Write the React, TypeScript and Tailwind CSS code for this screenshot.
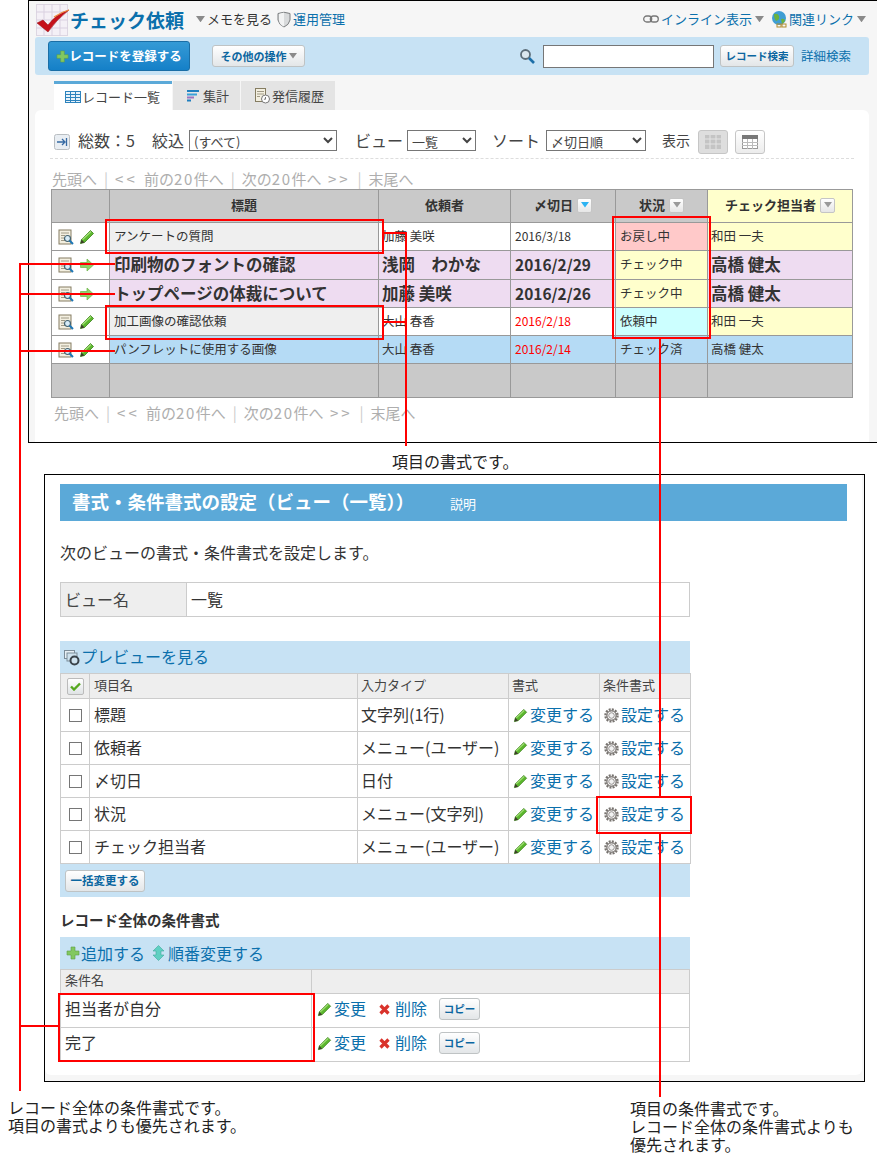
import React from "react";

const Pencil = ({ s = 16 }: { s?: number }) => (
  <svg width={s} height={s} viewBox="0 0 16 16" className="shrink-0">
    <path d="M1.5 14.5 L2.5 10.5 L11.5 1.5 L14.5 4.5 L5.5 13.5 Z" fill="#5cb82e" stroke="#3a7f1a" strokeWidth="0.8" />
    <path d="M3.5 10.5 L12 2.5" stroke="#a6e07a" strokeWidth="1.2" />
    <path d="M1.5 14.5 L2.5 10.5 L5.5 13.5 Z" fill="#3d3d2a" />
  </svg>
);
const Detail = () => (
  <svg width="16" height="16" viewBox="0 0 16 16" className="shrink-0">
    <rect x="1" y="1" width="12" height="14" fill="#f3efe0" stroke="#857d62" />
    <path d="M3 4h8M3 6.5h4M3 9h3M3 11.5h4" stroke="#a09a86" />
    <circle cx="9.5" cy="9.5" r="3" fill="#d7ecf8" stroke="#44626f" strokeWidth="1.2" />
    <path d="M11.5 11.5 L15 15" stroke="#1d76b5" strokeWidth="2" />
  </svg>
);
const Arrow = () => (
  <svg width="16" height="16" viewBox="0 0 16 16" className="shrink-0">
    <path d="M1.5 5.5H8V2l6.5 6L8 14v-3.5H1.5z" fill="#8fd36a" stroke="#6cb548" strokeWidth="0.7" />
  </svg>
);
const Gear = () => (
  <svg width="15" height="15" viewBox="0 0 16 16" className="shrink-0 mt-[3px]">
    <circle cx="8" cy="8" r="6.2" fill="none" stroke="#77736f" strokeWidth="3" strokeDasharray="2 1.2" />
    <circle cx="8" cy="8" r="5" fill="none" stroke="#8d8986" strokeWidth="1.6" />
    <circle cx="8" cy="8" r="3" fill="#f2f2f2" stroke="#8d8986" />
  </svg>
);
const Plus = ({ s = 14 }: { s?: number }) => (
  <svg width={s} height={s} viewBox="0 0 14 14" className="shrink-0">
    <path d="M5 1h4v4h4v4H9v4H5V9H1V5h4z" fill="#82c860" stroke="#5f9f45" strokeWidth="0.6" />
  </svg>
);
const Cross = () => (
  <svg width="13" height="13" viewBox="0 0 13 13" className="shrink-0">
    <path d="M2.5 2.5 L10.5 10.5 M10.5 2.5 L2.5 10.5" stroke="#d9332b" strokeWidth="3.2" />
  </svg>
);
const Tri = ({ c = "#8a8a8a", s = 9 }: { c?: string; s?: number }) => (
  <svg width={s} height={s * 0.7} viewBox="0 0 10 7" className="shrink-0">
    <path d="M0 0h10L5 7z" fill={c} />
  </svg>
);
const SortBtn = ({ blue }: { blue?: boolean }) => (
  <span className="inline-flex items-center justify-center w-[15px] h-[15px] ml-[4px] bg-gradient-to-b from-white to-[#e6e6e6] border border-[#c5c5c5] rounded-[2px]">
    <Tri c={blue ? "#2cb3f2" : "#9a9a9a"} s={8} />
  </span>
);

const Link = ({ children, className = "" }: { children: React.ReactNode; className?: string }) => (
  <span className={"text-[#0b70ac] " + className}>{children}</span>
);
const GrayBtn = ({ children, className = "" }: { children: React.ReactNode; className?: string }) => (
  <span className={"inline-flex items-center justify-center bg-gradient-to-b from-white to-[#e3e6e8] border border-[#bfc3c4] rounded-[3px] text-[#0b66a0] font-bold whitespace-nowrap " + className}>
    {children}
  </span>
);

const Pager = () => (
  <div className="flex text-[15px] leading-[20px] text-[#aeaeae] whitespace-pre">
    先頭へ
    <span className="mx-[7px] text-[#ccc]">|</span>
    <span className="tracking-[3px]">{"<< "}</span>前の<span className="tracking-[1.5px]">20</span>件へ
    <span className="mx-[7px] text-[#ccc]">|</span>
    次の<span className="tracking-[1.5px]">20</span>件へ<span className="tracking-[3px]">{" >>"}</span>
    <span className="mx-[7px] text-[#ccc]">|</span>
    末尾へ
  </div>
);

type Row = { bold?: boolean; edit: boolean; t: string; n: string; d: string; red?: boolean; s: string; p: string; h: string; tb: string; nb: string; sb: string; pb: string };
const rows: Row[] = [
  { edit: true, t: "アンケートの質問", n: "加藤 美咲", d: "2016/3/18", s: "お戻し中", p: "和田 一夫", h: "h-[28px]", tb: "bg-[#efefef]", nb: "bg-white", sb: "bg-[#ffc9c9]", pb: "bg-[#ffffcc]" },
  { bold: true, edit: false, t: "印刷物のフォントの確認", n: "浅岡　わかな", d: "2016/2/29", s: "チェック中", p: "高橋 健太", h: "h-[29px]", tb: "bg-[#eedcf1]", nb: "bg-[#eedcf1]", sb: "bg-[#ffffcc]", pb: "bg-[#eedcf1]" },
  { bold: true, edit: false, t: "トップページの体裁について", n: "加藤 美咲", d: "2016/2/26", s: "チェック中", p: "高橋 健太", h: "h-[28px]", tb: "bg-[#eedcf1]", nb: "bg-[#eedcf1]", sb: "bg-[#ffffcc]", pb: "bg-[#eedcf1]" },
  { edit: true, t: "加工画像の確認依頼", n: "大山 春香", d: "2016/2/18", red: true, s: "依頼中", p: "和田 一夫", h: "h-[28px]", tb: "bg-[#efefef]", nb: "bg-white", sb: "bg-[#ccffff]", pb: "bg-[#ffffcc]" },
  { edit: true, t: "パンフレットに使用する画像", n: "大山 春香", d: "2016/2/14", red: true, s: "チェック済", p: "高橋 健太", h: "h-[28px]", tb: "bg-[#b5dbf5]", nb: "bg-[#b5dbf5]", sb: "bg-[#b5dbf5]", pb: "bg-[#b5dbf5]" },
];

const th1 = "border border-[#999] font-bold text-[13px] text-[#333] text-center p-0 pb-[2px]";
const td1 = "border border-[#999] pl-[3px] pr-0 pt-0 pb-[2px] text-[#333] whitespace-nowrap overflow-hidden";

const RecordTable = () => (
  <table className="ml-[16px] w-[801px] table-fixed border-collapse">
    <colgroup>
      <col className="w-[58px]" />
      <col className="w-[269px]" />
      <col className="w-[132px]" />
      <col className="w-[105px]" />
      <col className="w-[92px]" />
      <col className="w-[145px]" />
    </colgroup>
    <tbody>
      <tr className="h-[33px] bg-[#c9c9c9]">
        <th className={th1}></th>
        <th className={th1}>標題</th>
        <th className={th1}>依頼者</th>
        <th className={th1}><span className="inline-flex items-center justify-center">〆切日<SortBtn blue /></span></th>
        <th className={th1}><span className="inline-flex items-center justify-center">状況<SortBtn /></span></th>
        <th className={th1 + " bg-[#ffffcc]"}><span className="inline-flex items-center justify-center">チェック担当者<SortBtn /></span></th>
      </tr>
      {rows.map((r, i) => {
        const f = r.bold ? "text-[16.5px] font-bold leading-[20px]" : "text-[12.5px] leading-[18px]";
        return (
          <tr key={i} className={r.h}>
            <td className="border border-[#999] p-0 bg-white">
              <div className="flex items-center pl-[6px] gap-[5px]">
                <Detail />
                {r.edit ? <Pencil /> : <Arrow />}
              </div>
            </td>
            <td className={td1 + " pl-[4px] " + f + " " + r.tb}>{r.t}</td>
            <td className={td1 + " " + f + " " + r.nb}>{r.n}</td>
            <td className={td1 + " pl-[4px] " + (r.bold ? "text-[15.5px] font-bold leading-[20px]" : "text-[12px] leading-[18px]") + " " + r.nb + (r.red ? " !text-[#ff0000]" : "")}>{r.d}</td>
            <td className={td1 + " pl-[4px] text-[12.5px] leading-[18px] " + r.sb}>{r.s}</td>
            <td className={td1 + " " + f + " " + r.pb}>{r.p}</td>
          </tr>
        );
      })}
      <tr className="h-[34px] bg-[#c9c9c9]">
        {[0, 1, 2, 3, 4, 5].map((k) => (
          <td key={k} className="border border-[#999] p-0"></td>
        ))}
      </tr>
    </tbody>
  </table>
);

const Panel1 = () => (
  <div className="ml-[28px] w-[849px] h-[443px] border border-black border-r-0 bg-[#f6f6f6] overflow-hidden">
    <div className="h-[36px] flex items-center justify-between pl-[7px] pr-[11px]">
      <div className="flex items-center">
        <svg width="34" height="33" viewBox="0 0 34 33" className="shrink-0 mt-[2px]">
          <rect x="0.5" y="0.5" width="31" height="31" fill="#f4f0f6" stroke="#ddd6e2" />
          <path d="M8 0V32M16 0V32M24 0V32M0 8H32M0 16H32M0 24H32" stroke="#d9d0e0" />
          <path d="M1 19 L7 16 L12 21 Q20 10 33 6 Q21 15 12 28 Z" fill="#c5111a" stroke="#8e0b12" strokeWidth="0.5" />
          <path d="M18 13 Q25 8 33 6" stroke="#f08a3c" strokeWidth="1.2" fill="none" />
        </svg>
        <span className="text-[19px] font-bold text-[#0b70ac] leading-none whitespace-nowrap">チェック依頼</span>
        <span className="ml-[12px] mr-[2px]"><Tri /></span>
        <span className="text-[13px] text-[#333] whitespace-nowrap">メモを見る</span>
        <svg width="14" height="17" viewBox="0 0 14 17" className="ml-[5px] mr-[2px]">
          <path d="M1 2.5 Q7 0 13 2.5 V9 Q12 14 7 16 Q2 14 1 9 Z" fill="#d8dadb" stroke="#7c7f80" />
          <path d="M7 1.5 V15.5 Q2.5 14 2 9 V3 Z" fill="#f2f3f3" />
        </svg>
        <Link className="text-[13px] whitespace-nowrap">運用管理</Link>
      </div>
      <div className="flex items-center">
        <svg width="16" height="10" viewBox="0 0 16 10">
          <rect x="0.7" y="2" width="8" height="6" rx="3" fill="none" stroke="#777" strokeWidth="1.3" />
          <rect x="7.3" y="2" width="8" height="6" rx="3" fill="none" stroke="#777" strokeWidth="1.3" />
        </svg>
        <Link className="text-[13px] ml-[2px] whitespace-nowrap">インライン表示</Link>
        <span className="ml-[3px]"><Tri /></span>
        <svg width="17" height="18" viewBox="0 0 17 18" className="ml-[7px] mr-[1px]">
          <circle cx="8" cy="8" r="7" fill="#3f9ed4" />
          <path d="M3 4 Q7 3 8 6 Q9 10 5 11 Q3 9 3 4ZM10 9 Q14 8 14 11 L11 14 Z" fill="#6bb23d" />
          <rect x="6" y="14" width="4" height="3" fill="none" stroke="#b18b2c" />
          <rect x="11" y="14" width="4" height="3" fill="none" stroke="#b18b2c" />
        </svg>
        <Link className="text-[13px] whitespace-nowrap">関連リンク</Link>
        <span className="ml-[3px]"><Tri /></span>
      </div>
    </div>
    <div className="ml-[6px] w-[834px] h-[38px] bg-[#c7e2f4] rounded-[3px] flex items-center">
      <span className="ml-[13px] w-[142px] h-[30px] flex items-center justify-center bg-gradient-to-b from-[#349ad6] to-[#1480c8] border border-[#1a6ea6] rounded-[3px] text-white font-bold text-[12.5px] whitespace-nowrap">
        <Plus s={13} />レコードを登録する
      </span>
      <GrayBtn className="ml-[22px] w-[93px] h-[22px] text-[11px] gap-[2px]">その他の操作<Tri s={8} /></GrayBtn>
      <svg width="16" height="16" viewBox="0 0 16 16" className="ml-[214px]">
        <circle cx="6.5" cy="6.5" r="4.5" fill="#dbe7ee" stroke="#5d6d78" strokeWidth="1.8" />
        <path d="M10 10 L15 15" stroke="#1d6fa8" strokeWidth="2.6" />
      </svg>
      <input className="ml-[8px] w-[171px] h-[23px] bg-white border border-[#767676]" />
      <GrayBtn className="ml-[6px] w-[74px] h-[22px] text-[10.5px]">レコード検索</GrayBtn>
      <Link className="ml-[7px] text-[12.5px] whitespace-nowrap">詳細検索</Link>
    </div>
    <div className="mt-[6px] ml-[25px] h-[29px] flex gap-[1px]">
      <div className="w-[118px] bg-white border-t-[3px] border-[#5ba9d8] flex items-center pl-[11px] text-[13px] text-[#444] whitespace-nowrap">
        <svg width="16" height="12" viewBox="0 0 16 12" className="mr-[1px]">
          <rect x="0.5" y="0.5" width="15" height="11" fill="#e8f3fb" stroke="#2d83bd" />
          <path d="M0 3.5H16M0 6.5H16M0 9.5H16M5.5 0V12M10.5 0V12" stroke="#2d83bd" />
        </svg>
        レコード一覧
      </div>
      <div className="w-[67px] bg-[#e4e4e4] flex items-center pl-[14px] text-[13px] text-[#444] whitespace-nowrap">
        <svg width="13" height="12" viewBox="0 0 13 12" className="mr-[3px]">
          <path d="M0 1h12" stroke="#1f7fbf" strokeWidth="2" />
          <path d="M0 4.5h10" stroke="#3aa1d8" strokeWidth="2" />
          <path d="M0 7.5h7" stroke="#9a74c0" strokeWidth="2" />
          <path d="M0 10.5h4" stroke="#1f7fbf" strokeWidth="2" />
        </svg>
        集計
      </div>
      <div className="w-[94px] bg-[#e4e4e4] flex items-center pl-[14px] text-[13px] text-[#444] whitespace-nowrap">
        <svg width="16" height="16" viewBox="0 0 16 16" className="mr-[1px]">
          <rect x="0.5" y="0.5" width="10" height="13" fill="#f3efe0" stroke="#857d62" />
          <path d="M2 3.5h7M2 6h7M2 8.5h3" stroke="#a09a86" />
          <circle cx="10.5" cy="11" r="4" fill="#fff" stroke="#777" />
          <path d="M10.5 9v2.2h-1.6" stroke="#777" fill="none" />
        </svg>
        発信履歴
      </div>
    </div>
    <div className="ml-[6px] w-[834px] h-[332px] bg-white rounded-t-[6px] pt-[20px]">
      <div className="mx-[15px] w-[804px] h-[29px] pb-[6px] border-b border-dashed border-[#ddd] flex items-start pl-[4px] text-[16px] leading-[20px] text-[#444]">
        <svg width="16" height="16" viewBox="0 0 16 16" className="mt-[4px] shrink-0">
          <rect x="0.5" y="0.5" width="15" height="15" rx="2" fill="#e9eef3" stroke="#b9bec2" />
          <path d="M3 8h7M8 5l3 3-3 3M12.5 4v8" stroke="#3569a3" strokeWidth="1.3" fill="none" />
        </svg>
        <span className="ml-[8px] w-[57px] whitespace-nowrap">総数：5</span>
        <span className="ml-[17px] w-[32px] whitespace-nowrap">絞込</span>
        <select className="ml-[5px] w-[148px] h-[21px] border border-[#767676] bg-white text-[13px] leading-none">
          <option>(すべて)</option>
        </select>
        <span className="ml-[18px] w-[45px] whitespace-nowrap">ビュー</span>
        <select className="ml-[7px] w-[69px] h-[21px] border border-[#767676] bg-white text-[13px] leading-none">
          <option>一覧</option>
        </select>
        <span className="ml-[16px] w-[48px] whitespace-nowrap">ソート</span>
        <select className="ml-[6px] w-[100px] h-[21px] border border-[#767676] bg-white text-[13px] leading-none">
          <option>〆切日順</option>
        </select>
        <span className="ml-[16px] w-[28px] text-[14px] whitespace-nowrap">表示</span>
        <span className="ml-[8px] w-[30px] h-[24px] bg-[#dedede] border border-[#c6c6c6] rounded-[3px] flex items-center justify-center">
          <svg width="16" height="14" viewBox="0 0 16 14"><rect width="16" height="14" fill="#c4c4c4" /><path d="M5 0V14M11 0V14M0 4H16M0 9H16" stroke="#e4e4e4" /></svg>
        </span>
        <span className="ml-[7px] w-[30px] h-[24px] bg-gradient-to-b from-white to-[#ececec] border border-[#c6c6c6] rounded-[3px] flex items-center justify-center">
          <svg width="16" height="14" viewBox="0 0 16 14"><rect x="0.5" y="0.5" width="15" height="13" fill="#fff" stroke="#999" /><rect width="16" height="4" fill="#777" /><path d="M5.5 4V14M10.5 4V14M0 7.5H16M0 10.5H16" stroke="#bbb" /></svg>
        </span>
      </div>
      <div className="ml-[17px] mt-[10px] h-[20px]"><Pager /></div>
      <RecordTable />
      <div className="ml-[19px] mt-[5px]"><Pager /></div>
    </div>
  </div>
);

const td2 = "border border-[#ccc] p-0 pb-[3px] text-[16px] leading-[20px] text-[#333] whitespace-nowrap";
const th2 = "border border-[#ccc] bg-[#eeeeee] p-0 pb-[3px] pl-[4px] font-normal text-left text-[13px] text-[#444] whitespace-nowrap";
const items = [
  ["標題", "文字列(1行)"],
  ["依頼者", "メニュー(ユーザー)"],
  ["〆切日", "日付"],
  ["状況", "メニュー(文字列)"],
  ["チェック担当者", "メニュー(ユーザー)"],
];
const Check = () => <span className="block mx-auto mt-[3px] w-[13px] h-[13px] bg-white border border-[#767676]" />;

const Panel2 = () => (
  <div className="mt-[31px] ml-[44px] w-[821px] h-[608px] border border-black bg-[#f6f6f6]">
    <div className="w-[817px] h-[600px] bg-white rounded-b-[6px] pt-[9px] pl-[15px]">
      <div className="w-[787px] h-[37px] pb-[2px] bg-[#5ba9d8] flex items-center text-white pl-[12px]">
        <span className="text-[18.5px] font-bold whitespace-nowrap w-[378px]">書式・条件書式の設定（ビュー（一覧））</span>
        <span className="text-[13px] mt-[5px] whitespace-nowrap">説明</span>
      </div>
      <p className="mt-[21px] h-[40px] text-[16px] leading-[20px] text-[#333] whitespace-nowrap">次のビューの書式・条件書式を設定します。</p>
      <table className="w-[630px] table-fixed border-collapse">
        <colgroup><col className="w-[126px]" /><col /></colgroup>
        <tbody>
          <tr className="h-[34px]">
            <th className={th2 + " !text-[16px] !pb-[2px]"}>ビュー名</th>
            <td className={td2 + " !pb-[2px] pl-[4px]"}>一覧</td>
          </tr>
        </tbody>
      </table>
      <div className="mt-[24px] w-[630px] h-[32px] pb-[2px] bg-[#c7e2f4] flex items-center pl-[4px]">
        <svg width="17" height="17" viewBox="0 0 17 17" className="mt-[3px]">
          <rect x="0.5" y="1.5" width="10" height="8" fill="#e8f0f5" stroke="#7d8d99" />
          <rect x="3" y="4" width="10" height="8" fill="#cfe2ee" stroke="#7d8d99" />
          <circle cx="10.5" cy="11.5" r="4" fill="#cfe2ee" stroke="#3a434a" strokeWidth="2" />
        </svg>
        <Link className="text-[16px] whitespace-nowrap">プレビューを見る</Link>
      </div>
      <table className="w-[630px] table-fixed border-collapse">
        <colgroup>
          <col className="w-[29px]" /><col className="w-[268px]" /><col className="w-[151px]" /><col className="w-[91px]" /><col className="w-[91px]" />
        </colgroup>
        <tbody>
          <tr className="h-[25px]">
            <th className={th2 + " !pl-0 !pb-0"}>
              <span className="flex mx-auto w-[17px] h-[17px] items-center justify-center bg-gradient-to-b from-white to-[#dfe3e5] border border-[#bbb] rounded-[2px]">
                <svg width="11" height="9" viewBox="0 0 11 9"><path d="M1 4.5 L4 7.5 L10 1.5" fill="none" stroke="#56a81f" strokeWidth="2.4" /></svg>
              </span>
            </th>
            <th className={th2}>項目名</th>
            <th className={th2 + " !pl-[3px]"}>入力タイプ</th>
            <th className={th2 + " !pl-[3px]"}>書式</th>
            <th className={th2 + " !pl-[3px]"}>条件書式</th>
          </tr>
          {items.map(([a, b]) => (
            <tr key={a} className="h-[33px]">
              <td className={td2}><Check /></td>
              <td className={td2 + " pl-[4px]"}>{a}</td>
              <td className={td2 + " pl-[3px] overflow-hidden"}>{b}</td>
              <td className={td2}>
                <span className="flex items-center pl-[4px] gap-[2px]"><span className="mt-[3px]"><Pencil s={15} /></span><Link>変更する</Link></span>
              </td>
              <td className={td2}>
                <span className="flex items-center pl-[4px] gap-[2px]"><Gear /><Link>設定する</Link></span>
              </td>
            </tr>
          ))}
        </tbody>
      </table>
      <div className="w-[630px] h-[33px] bg-[#c7e2f4] flex items-center pl-[5px]">
        <GrayBtn className="w-[80px] h-[22px] text-[11.5px]">一括変更する</GrayBtn>
      </div>
      <p className="mt-[14px] h-[26px] text-[14.5px] font-bold leading-[18px] text-[#333] whitespace-nowrap">レコード全体の条件書式</p>
      <div className="w-[630px] h-[32px] pb-[1px] bg-[#c7e2f4] flex items-center pl-[6px]">
        <Plus />
        <Link className="ml-[1px] text-[16px] whitespace-nowrap">追加する</Link>
        <svg width="13" height="16" viewBox="0 0 13 16" className="ml-[7px] mr-[3px]">
          <path d="M6.5 0.5 L12 6 H9 V10 H12 L6.5 15.5 L1 10 H4 V6 H1 Z" fill="#5fd0c2" stroke="#3fa89c" strokeWidth="0.6" />
        </svg>
        <Link className="text-[16px] whitespace-nowrap">順番変更する</Link>
      </div>
      <table className="w-[630px] table-fixed border-collapse">
        <colgroup><col className="w-[251px]" /><col /></colgroup>
        <tbody>
          <tr className="h-[24px]">
            <th className={th2}>条件名</th>
            <th className={th2}></th>
          </tr>
          {["担当者が自分", "完了"].map((t) => (
            <tr key={t} className="h-[34px]">
              <td className={td2 + " pl-[4px] !pb-[5px]"}>{t}</td>
              <td className={td2 + " !pb-[3px]"}>
                <span className="flex items-center pl-[5px]">
                  <Pencil s={15} />
                  <Link className="ml-[2px] -mt-[3px]">変更</Link>
                  <span className="ml-[12px]"><Cross /></span>
                  <Link className="ml-[4px] -mt-[3px]">削除</Link>
                  <GrayBtn className="ml-[12px] w-[41px] h-[22px] text-[10.5px]">コピー</GrayBtn>
                </span>
              </td>
            </tr>
          ))}
        </tbody>
      </table>
    </div>
  </div>
);

const Red = ({ className }: { className: string }) => <div className={"absolute bg-[#ff0000] " + className} />;
const Box = ({ className }: { className: string }) => <div className={"absolute border-2 border-[#ff0000] " + className} />;
const Note = ({ className, children }: { className: string; children: React.ReactNode }) => (
  <div className={"absolute text-[16px] leading-[18px] text-[#222] whitespace-nowrap " + className}>{children}</div>
);

export default function App() {
  return (
    <div className="relative w-[877px] h-[1160px] bg-white overflow-hidden font-['Noto_Sans_CJK_JP','Noto_Sans',sans-serif]">
      <Panel1 />
      <Panel2 />
      <Box className="left-[105px] top-[219px] w-[279px] h-[35px]" />
      <Box className="left-[105px] top-[305px] w-[279px] h-[35px]" />
      <Box className="left-[612px] top-[216px] w-[99px] h-[123px]" />
      <Box className="left-[596px] top-[796px] w-[96px] h-[38px]" />
      <Box className="left-[58px] top-[993px] w-[257px] h-[69px]" />
      <Red className="left-[659px] top-[338px] w-[2px] h-[459px]" />
      <Red className="left-[659px] top-[833px] w-[2px] h-[264px]" />
      <Red className="left-[405px] top-[232px] w-[2px] h-[214px]" />
      <Red className="left-[383px] top-[232px] w-[23px] h-[2px]" />
      <Red className="left-[383px] top-[321px] w-[23px] h-[2px]" />
      <Red className="left-[19px] top-[263px] w-[2px] h-[828px]" />
      <Red className="left-[19px] top-[263px] w-[96px] h-[2px]" />
      <Red className="left-[19px] top-[293px] w-[96px] h-[2px]" />
      <Red className="left-[19px] top-[350px] w-[96px] h-[2px]" />
      <Red className="left-[19px] top-[1025px] w-[40px] h-[2px]" />
      <Note className="left-[392px] top-[452px]">項目の書式です。</Note>
      <Note className="left-[8px] top-[1098px]">レコード全体の条件書式です。<br />項目の書式よりも優先されます。</Note>
      <Note className="left-[630px] top-[1099px]">項目の条件書式です。<br />レコード全体の条件書式よりも<br />優先されます。</Note>
    </div>
  );
}
